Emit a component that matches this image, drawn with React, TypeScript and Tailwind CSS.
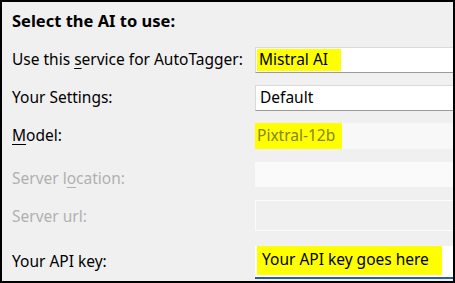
import React from 'react';

const font = { fontFamily: '"Noto Sans", "Open Sans", sans-serif' };

interface RowProps {
  label: React.ReactNode;
  disabled?: boolean;
  className?: string;
  children: React.ReactNode;
}

const Row = ({ label, disabled, className, children }: RowProps) => (
  <div className={`flex items-center ${className ?? ''}`}>
    <div className={`w-[253px] shrink-0 pl-[10px] ${disabled ? 'text-[#b0b0b0]' : 'text-black'}`}>
      {label}
    </div>
    <div className="flex-1 -mr-3">{children}</div>
  </div>
);

const Key = ({ children }: { children: React.ReactNode }) => (
  <span className="underline decoration-1 underline-offset-[3px]">{children}</span>
);

const Highlight = ({ children, className }: { children: React.ReactNode; className?: string }) => (
  <span className={`inline-flex h-full items-center bg-[#ffff00] pl-[2px] ${className ?? ''}`}>{children}</span>
);

export default function App() {
  return (
    <div
      className="w-[455px] h-[283px] overflow-hidden border-2 border-black bg-[#f0f0f0] text-[15.5px] leading-none"
      style={font}
    >
      <div className="pl-[10px] pt-[11px] font-bold text-[16.5px] text-black">Select the AI to use:</div>

      <Row className="mt-[17px] h-[26px]" label={<>Use this <Key>s</Key>ervice for AutoTagger:</>}>
        <div className="flex h-[26px] items-stretch border border-[#d9d9d9] border-b-[#9a9a9a] bg-white py-px pl-px">
          <Highlight className="w-[84px]">Mistral AI</Highlight>
        </div>
      </Row>

      <Row className="mt-[12px] h-[26px]" label="Your Settings:">
        <div className="flex h-[26px] items-center border border-[#d9d9d9] border-b-[#9a9a9a] bg-white pl-[4px]">
          Default
        </div>
      </Row>

      <Row className="mt-[12px] h-[26px]" label={<><Key>M</Key>odel:</>}>
        <div className="flex h-[26px] items-stretch bg-[#f8f8f8]">
          <Highlight className="w-[87px] text-[#85851c]">Pixtral-12b</Highlight>
        </div>
      </Row>

      <Row className="mt-[13px] h-[25px]" disabled label={<span className="relative top-[5px]">Server l<Key>o</Key>cation:</span>}>
        <div className="h-[25px] bg-[#fafafa]" />
      </Row>

      <Row className="mt-[13px] h-[31px]" disabled label={<span className="relative top-[2px]">Server url:</span>}>
        <div className="h-[31px] border border-[#fbfbfb] bg-[#f0f0f0]" />
      </Row>

      <Row className="mt-[15px] h-[33px]" label="Your API key:">
        <div className="flex h-[33px] flex-col bg-white">
          <div className="flex h-[29px] items-stretch pl-[2px]">
            <span className="inline-flex items-center bg-[#ffff00] pl-[5px] w-[185px]">Your API key goes here</span>
          </div>
          <div className="mt-[2px] h-[2px] bg-[#2a5f94]" />
        </div>
      </Row>
    </div>
  );
}
